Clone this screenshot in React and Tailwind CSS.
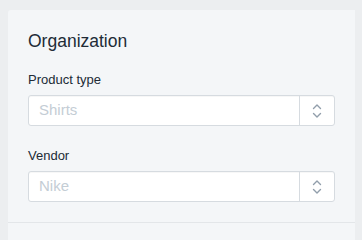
import React from 'react';

function Chevrons() {
  return (
    <svg width="10" height="14" viewBox="0 0 10 14" fill="none" stroke="#919eab" strokeWidth="1.4" strokeLinecap="round" strokeLinejoin="round">
      <path d="M1.5 4.5 L5 1 L8.5 4.5" />
      <path d="M1.5 9.5 L5 13 L8.5 9.5" />
    </svg>
  );
}

function SelectField({ label, placeholder, className = '' }) {
  return (
    <div className={className}>
      <label className="block text-[13px] leading-4 text-[#212b36]">{label}</label>
      <div className="mt-[7px] flex h-[31px] rounded-[3px] border border-[#d6dbe0] bg-white shadow-[0_1px_0_rgba(0,0,0,0.03)_inset]">
        <div className="flex flex-1 items-center pl-[10px] text-[15px] text-[#c4cdd5]">{placeholder}</div>
        <div className="flex w-[35px] items-center justify-center border-l border-[#d6dbe0]">
          <Chevrons />
        </div>
      </div>
    </div>
  );
}

export default function App() {
  return (
    <div className="h-[240px] w-[362px] overflow-hidden bg-[#eceef0] pt-[10px] pl-[8px] pr-[7px] font-['Liberation_Sans',Arial,sans-serif]">
      <div className="h-full rounded-tl-[3px] bg-[#f4f6f8]">
        {/* Organization section */}
        <div className="border-b border-[#e3e6e9] px-[20px] pt-[19px] pb-[20px]">
          <h2 className="text-[17.5px] leading-6 text-[#212b36]">Organization</h2>
          <SelectField className="mt-[19px]" label="Product type" placeholder="Shirts" />
          <SelectField className="mt-[22px]" label="Vendor" placeholder="Nike" />
        </div>
        <div className="h-[40px]" />
      </div>
    </div>
  );
}
